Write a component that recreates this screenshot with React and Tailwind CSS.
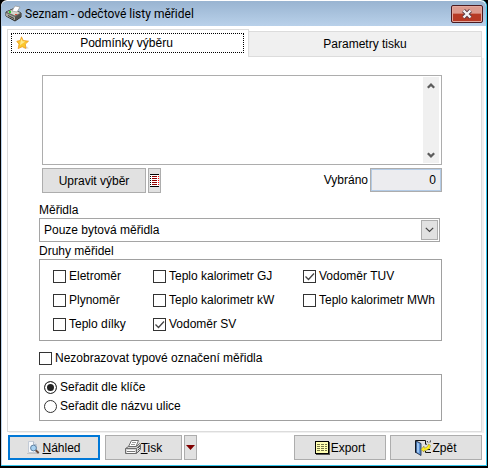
import { useState } from "react";

function PrinterColorIcon() {
  return (
    <svg width="17" height="17" viewBox="0 0 17 17" aria-hidden="true">
      <path d="M1 7 8 4l8 4v4l-6 4-9-5z" fill="#6b6b63" stroke="#2b2b28" />
      <path d="M1 7 8 4l8 4-6 3z" fill="#d6d6cc" stroke="#55554f" strokeWidth=".7" />
      <path d="m7 6 3-5 5 1-3 5z" fill="#fff" stroke="#8a8a84" strokeWidth=".6" />
      <path d="m1 8 9 4v3l-9-4z" fill="#a9a9a0" />
      <path d="m3 10 6 3v1l-6-3z" fill="#3a3a36" />
      <path d="M4 6h2v2H4z" fill="#27d42f" />
      <path d="M10 9h2v1h-2z" fill="#e54b38" />
      <path d="m10 12 6-3.500v3l-6 4z" fill="#50504b" />
    </svg>
  );
}

function StarIcon() {
  return (
    <svg width="14" height="14" viewBox="0 0 14 14" aria-hidden="true">
      <path d="M7 12.500h6l-2-2z" fill="#dcdce4" />
      <path d="m5.500.8 1.700 3.700 5.300.7-3.200 2.900.7 4.300-3.800-1.700-4 1.900.8-4.400L.8 5.300l3.500-.9z" fill="#fbc82e" stroke="#ef9a1c" strokeWidth=".8" />
      <path d="m5.500 2.500 1 2.800 2.800.3-2.500 1.700-2.800 2 .5-3.200z" fill="#ffe98c" />
    </svg>
  );
}

function CloseIcon() {
  return (
    <svg width="12" height="10" viewBox="0 0 12 10" aria-hidden="true">
      <path d="m2.500 1.500 7 7m0-7-7 7" stroke="#5a3c44" strokeWidth="4.200" />
      <path d="m2.500 1.500 7 7m0-7-7 7" stroke="#f4f4f6" strokeWidth="2.400" />
    </svg>
  );
}

function ListIcon() {
  return (
    <svg width="9" height="13" viewBox="0 0 9 13" shapeRendering="crispEdges" aria-hidden="true">
      <path d="M0 0h9v13H0z" fill="#fff" />
      <path d="M0 0h9v1H0zM0 12h9v1H0zM0 2h1v1H0zM0 4h1v1H0zM0 6h1v1H0zM0 8h1v1H0zM0 10h1v1H0z" fill="#000" />
      <path d="M2 2h5v1H2zM2 4h5v1H2zM2 6h5v1H2zM2 8h5v1H2zM2 10h5v1H2z" fill="#900000" />
      <path d="M8 2h1v1H8zM8 4h1v1H8zM8 6h1v1H8zM8 8h1v1H8zM8 10h1v1H8z" fill="#f00" />
    </svg>
  );
}

function Chevron({ up }) {
  return (
    <svg width="8" height="6" viewBox="0 0 8 6" fill="none" aria-hidden="true">
      <path d={up ? "M.8 4.800 4 1.600l3.200 3.200" : "M.8 1.200 4 4.400l3.200-3.200"} stroke="#5c5c5c" strokeWidth="2.200" />
    </svg>
  );
}

function PreviewIcon() {
  return (
    <svg width="13" height="13" viewBox="0 0 13 13" aria-hidden="true">
      <path d="M1.500.5h5l3 3v8h-8z" fill="#f6f8fb" stroke="#c3cbd6" />
      <path d="M6.500.5v3h3" fill="#dfe6ee" stroke="#b4bdc9" />
      <path d="M0 12.500h12" stroke="#c4c4c4" />
      <circle cx="6.500" cy="7" r="2.900" fill="#a9d3f3" stroke="#5e7f9f" />
      <path d="m8.700 9.200 3 2.800" stroke="#6a4b3c" strokeWidth="2" />
    </svg>
  );
}

function PrinterIcon() {
  return (
    <svg width="16" height="15" viewBox="0 0 16 15" aria-hidden="true">
      <path d="m3.500 6.500 3-6h7l-2.500 6z" fill="#fff" stroke="#6e6e6e" />
      <path d="M7 2.500h4M6 4.500h4" stroke="#9a9a9a" />
      <path d="m.5 8.500 3-2h8l3-3 1 1v5l-4 4H.5z" fill="#d2d2d2" stroke="#6b6b6b" />
      <path d="M.5 8.500h11l4-4M11.500 8.500v5" fill="none" stroke="#707070" />
      <path d="M2 10.500h8M2 12.500h8" stroke="#fff" />
      <path d="M2 11.500h8" stroke="#777" />
      <path d="m13 8 2-2M13 10l2-2M13 12l2-2" stroke="#555" />
    </svg>
  );
}

function TableIcon() {
  return (
    <svg width="15" height="14" viewBox="0 0 15 14" shapeRendering="crispEdges" aria-hidden="true">
      <path d="M1 1h14v13H1z" fill="#555" />
      <path d="M0 0h14v13H0z" fill="#000" />
      <path d="M1 1h12v11H1z" fill="#ffffb0" />
      <path d="M2 3h3v1H2zM6 3h3v1H6zM10 3h2v1h-2zM2 5h3v1H2zM6 5h3v1H6zM10 5h2v1h-2zM2 7h3v1H2zM6 7h3v1H6zM10 7h2v1h-2zM2 9h3v1H2zM6 9h3v1H6zM10 9h2v1h-2z" fill="#77774a" />
    </svg>
  );
}

function DoorIcon() {
  return (
    <svg width="17" height="16" viewBox="0 0 17 16" aria-hidden="true">
      <path d="M.5.500h10v4M.5.500v12h2M10.500 11v1.500H16M10 9.500h5" fill="none" stroke="#111" />
      <path d="M1 1l5 2.500v12L1 12.500z" fill="#5d93d6" stroke="#16243d" strokeWidth=".8" />
      <path d="M2 2.500 4 3.500v9.500l-2-1z" fill="#9bc4f1" />
      <path d="M6 9.500 9 6v2c3 0 4-2 4.500-4l2 1.500C15 9 12.500 10.500 9 10.500v1.500z" fill="#ffee1f" stroke="#8d7c1c" strokeWidth=".5" />
      <path d="m12 1 1 1.500M15.500.5 15 2.500M11 4l1 .5" stroke="#333" />
    </svg>
  );
}

function CheckItem({ label, defaultChecked = false }) {
  return (
    <label className="flex items-center gap-[3px] whitespace-nowrap">
      <span className="grid shrink-0">
        <input
          type="checkbox"
          defaultChecked={defaultChecked}
          className="peer col-start-1 row-start-1 size-[13px] appearance-none border border-[#333] bg-white"
        />
        <svg
          className="pointer-events-none invisible col-start-1 row-start-1 peer-checked:visible"
          width="13"
          height="13"
          viewBox="0 0 13 13"
          fill="none"
          aria-hidden="true"
        >
          <path d="m2.500 6.500 3 3 5.500-6" stroke="#444" strokeWidth="1.300" />
        </svg>
      </span>
      {label}
    </label>
  );
}

function RadioItem({ label, value, defaultChecked = false }) {
  return (
    <label className="flex items-center gap-[3px]">
      <input
        type="radio"
        name="order"
        value={value}
        defaultChecked={defaultChecked}
        className="size-[13px] shrink-0 appearance-none rounded-full border border-[#333] bg-white checked:bg-[#222] checked:shadow-[inset_0_0_0_2px_white]"
      />
      {label}
    </label>
  );
}

const buttonBase = "flex h-[25px] items-center justify-center border border-[#adadad] bg-[#e1e1e1]";

export default function App() {
  const [tab, setTab] = useState("conditions");

  return (
    <div className="flex min-h-screen flex-col bg-black pb-[2px] font-['Liberation_Sans',Arial,sans-serif] text-[12px] leading-4 text-black">
      <div className="mx-px flex flex-1 flex-col rounded-t-md border-r border-b border-[#35c8ee] bg-white">
        <header className="mt-px flex h-[25px] items-center rounded-t-md bg-linear-to-b from-[#99b4d1] to-[#b9d1ea] pr-[3px] pl-1">
          <PrinterColorIcon />
          <h1 className="ml-[3px] flex-1 font-[Roboto,sans-serif] text-[12px]">Seznam - odečtové listy měřidel</h1>
          <button
            type="button"
            aria-label="Zavřít"
            className="flex h-[18px] w-8 items-center justify-center rounded-[2px] border border-[#4a1a20] bg-linear-to-b from-[#dc9a8e] from-45% to-[#b73a25] to-50% shadow-[inset_0_0_0_1px_#e3a89e]"
          >
            <CloseIcon />
          </button>
        </header>

        <div className="flex flex-1 flex-col border-l border-[#b9d1ea] pt-[3px] pr-1 pl-[5px]">
          <div role="tablist" className="flex items-end">
            <button
              type="button"
              role="tab"
              aria-selected={tab === "conditions"}
              onClick={() => setTab("conditions")}
              className="h-[28px] w-[242px] border-t border-r border-l border-[#dcdcdc] bg-white p-[3px] pr-1 pb-1"
            >
              <span className="flex h-full items-center border border-dotted border-black px-1">
                <StarIcon />
                <span className="flex-1 pr-4 text-center">Podmínky výběru</span>
              </span>
            </button>
            <button
              type="button"
              role="tab"
              aria-selected={tab === "print"}
              onClick={() => setTab("print")}
              className="h-[26px] flex-1 border-t border-r border-b border-[#dcdcdc] bg-[#f0f0f0]"
            >
              Parametry tisku
            </button>
          </div>

          <main className="border-r border-b border-l border-[#dcdcdc] pt-[18px] pr-[39px] pb-[10px] pl-[31px] shadow-[2px_1px_0_#f0f0f0]">
            <div className="ml-[3px] flex h-[90px] border border-[#adadad] p-px">
              <textarea aria-label="Podmínky" className="flex-1 resize-none outline-none" />
              <div className="mr-px flex w-4 flex-col justify-between bg-[#f0f0f0]">
                <button type="button" aria-label="Nahoru" className="flex h-[17px] items-center justify-center">
                  <Chevron up />
                </button>
                <button type="button" aria-label="Dolů" className="flex h-[17px] items-center justify-center">
                  <Chevron />
                </button>
              </div>
            </div>

            <div className="mt-[2px] ml-[3px] flex items-center gap-[2px]">
              <button type="button" className={`${buttonBase} mt-px w-[104px]`}>
                Upravit výběr
              </button>
              <button type="button" aria-label="Seznam" className={`${buttonBase} mt-px w-[13px]`}>
                <ListIcon />
              </button>
              <label htmlFor="selected" className="ml-auto">
                Vybráno
              </label>
              <input
                id="selected"
                readOnly
                value="0"
                className="h-6 w-[72px] border border-[#adadad] bg-[#ececef] px-[5px] text-right shadow-[inset_0_0_0_1px_#b3cbe6]"
              />
            </div>

            <label htmlFor="meters" className="mt-[9px] block">
              Měřidla
            </label>
            <div className="mr-[2px] grid border border-[#a5a5a5]">
              <select id="meters" className="col-start-1 row-start-1 h-[22px] appearance-none bg-white pl-1">
                <option>Pouze bytová měřidla</option>
              </select>
              <span className="pointer-events-none col-start-1 row-start-1 mr-px flex h-5 w-[17px] items-center justify-center self-center justify-self-end border border-[#adadad] bg-[#e1e1e1]">
                <svg width="9" height="6" viewBox="0 0 9 6" fill="none" aria-hidden="true">
                  <path d="m.8.800 3.700 3.700L8.200.8" stroke="#444" strokeWidth="1.200" />
                </svg>
              </span>
            </div>

            <fieldset className="mt-px">
              <legend>Druhy měřidel</legend>
              <div className="flex h-[82px] border border-[#a0a0a0] pt-2 pl-[13px] *:flex *:flex-col *:gap-2">
                <div className="w-[100px]">
                  <CheckItem label="Eletroměr" />
                  <CheckItem label="Plynoměr" />
                  <CheckItem label="Teplo dílky" />
                </div>
                <div className="w-[150px]">
                  <CheckItem label="Teplo kalorimetr GJ" />
                  <CheckItem label="Teplo kalorimetr kW" />
                  <CheckItem label="Vodoměr SV" defaultChecked />
                </div>
                <div>
                  <CheckItem label="Vodoměr TUV" defaultChecked />
                  <CheckItem label="Teplo kalorimetr MWh" />
                </div>
              </div>
            </fieldset>

            <div className="mt-[9px]">
              <CheckItem label="Nezobrazovat typové označení měřidla" />
            </div>

            <div role="radiogroup" aria-label="Řazení" className="mt-2 flex h-[47px] flex-col gap-[3px] border border-[#a0a0a0] pt-1 pl-1">
              <RadioItem value="key" label="Seřadit dle klíče" defaultChecked />
              <RadioItem value="street" label="Seřadit dle názvu ulice" />
            </div>
          </main>

          <footer className="mt-[3px] mb-1 flex">
            <button type="button" className="ml-px flex h-[25px] w-[92px] items-center justify-center gap-[2px] border-2 border-[#0078d7] bg-[#e1e1e1]">
              <PreviewIcon />
              <span>
                <u>N</u>áhled
              </span>
            </button>
            <button type="button" className={`${buttonBase} ml-[5px] w-[77px]`}>
              <PrinterIcon />
              <span>
                <u>T</u>isk
              </span>
            </button>
            <button type="button" aria-label="Možnosti tisku" className={`${buttonBase} ml-[2px] w-[13px]`}>
              <svg width="9" height="5" viewBox="0 0 9 5" aria-hidden="true">
                <path d="M0 0h9L4.500 5z" fill="#800000" />
              </svg>
            </button>
            <button type="button" className={`${buttonBase} ml-auto w-[92px] gap-px`}>
              <TableIcon />
              Export
            </button>
            <button type="button" className={`${buttonBase} ml-1 w-[92px]`}>
              <DoorIcon />
              Zpět
            </button>
          </footer>
        </div>
      </div>
    </div>
  );
}
